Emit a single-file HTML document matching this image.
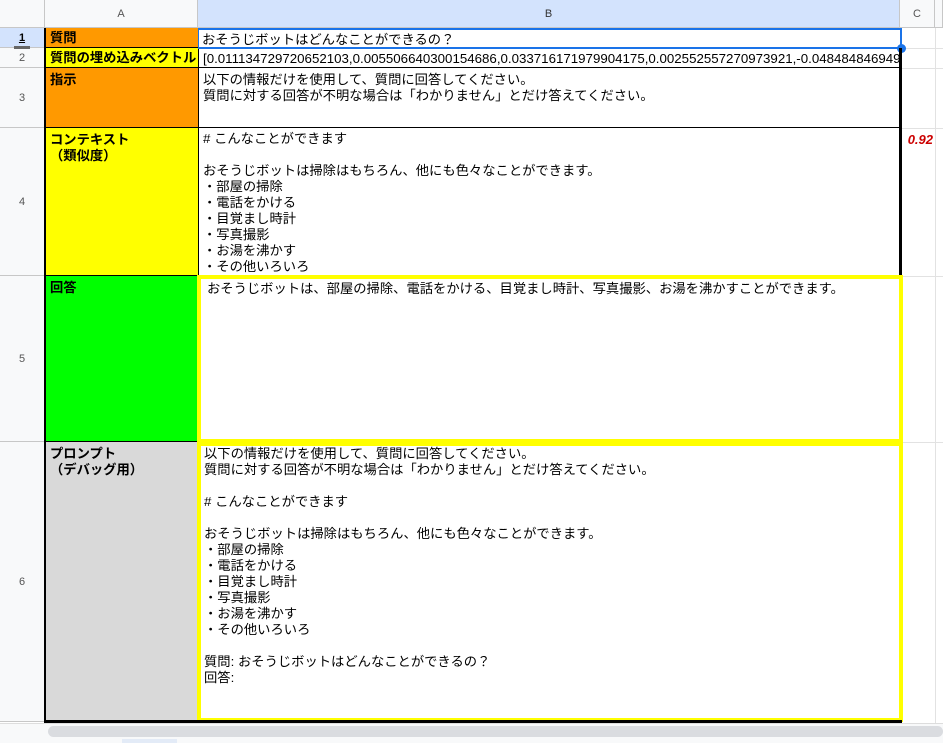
<!DOCTYPE html>
<html><head><meta charset="utf-8"><style>
body{margin:0;width:943px;height:743px;overflow:hidden;background:#fff;font-family:"Liberation Sans","Noto Sans CJK JP",sans-serif;font-size:13.3px;color:#000;position:relative}
div{position:absolute;box-sizing:border-box}
.h{background:#f8f9fa;color:#555;font-size:11px;text-align:center;border-right:1px solid #c7c7c7;border-bottom:1px solid #c7c7c7}
.c{line-height:16px;white-space:pre;overflow:hidden;padding-left:4px}
.a{font-weight:bold;padding-left:5px;line-height:16px;white-space:pre}
.gl{background:#e2e2e2}
</style></head><body>
<div class="h" style="left:0;top:0;width:45px;height:28px;background:#f8f9fa"></div>
<div class="h" style="left:45px;top:0;width:153px;height:28px;line-height:28px">A</div>
<div class="h" style="left:198px;top:0;width:702px;height:28px;line-height:28px;background:#d3e3fd;color:#333">B</div>
<div class="h" style="left:900px;top:0;width:35px;height:28px;line-height:28px">C</div>
<div class="h" style="left:935px;top:0;width:8px;height:28px"></div>
<div class="h" style="left:0;top:28px;width:45px;height:20px;line-height:20px;background:#d3e3fd;color:#000;font-weight:bold;text-decoration:underline">1</div>
<div class="h" style="left:0;top:48px;width:45px;height:20px;line-height:20px">2</div>
<div style="left:14px;top:46px;width:16px;height:3px;background:#666"></div>
<div class="h" style="left:0;top:68px;width:45px;height:60px;line-height:60px">3</div>
<div class="h" style="left:0;top:128px;width:45px;height:148px;line-height:148px">4</div>
<div class="h" style="left:0;top:276px;width:45px;height:166px;line-height:166px">5</div>
<div class="h" style="left:0;top:442px;width:45px;height:280px;line-height:280px">6</div>
<div class="gl" style="left:935px;top:28px;width:1px;height:695px"></div>
<div class="gl" style="left:900px;top:68px;width:43px;height:1px"></div>
<div class="gl" style="left:900px;top:48px;width:43px;height:1px"></div>
<div class="gl" style="left:900px;top:128px;width:43px;height:1px"></div>
<div class="gl" style="left:900px;top:276px;width:43px;height:1px"></div>
<div class="gl" style="left:900px;top:442px;width:43px;height:1px"></div>
<div class="a" style="left:45px;top:28px;width:153px;height:20px;background:#ff9900;line-height:20px;border-bottom:1px solid #000">質問</div>
<div class="a" style="left:45px;top:48px;width:153px;height:20px;background:#ffff00;line-height:20px;border-bottom:1px solid #000">質問の埋め込みベクトル</div>
<div class="a" style="left:45px;top:68px;width:153px;height:60px;background:#ff9900;padding-top:4px;border-bottom:1px solid #000">指示</div>
<div class="a" style="left:45px;top:128px;width:153px;height:148px;background:#ffff00;padding-top:4px;border-bottom:1px solid #000">コンテキスト
（類似度）</div>
<div class="a" style="left:45px;top:276px;width:153px;height:166px;background:#00ff00;padding-top:4px;border-bottom:1px solid #000">回答</div>
<div class="a" style="left:45px;top:442px;width:153px;height:280px;background:#d9d9d9;padding-top:4px">プロンプト
（デバッグ用）</div>
<div class="c" style="left:198px;top:28px;width:704px;height:21px;line-height:20px;border:2px solid #1a73e8;border-left:1px solid #1a73e8;padding-left:3px">おそうじボットはどんなことができるの？</div>
<div style="left:897px;top:44px;width:9px;height:9px;border-radius:50%;background:#1a73e8"></div>
<div class="c" style="left:198px;top:49px;width:702px;height:19px;line-height:19px;border-left:1px solid #000;border-bottom:1px solid #000">[0.011134729720652103,0.005506640300154686,0.033716171979904175,0.002552557270973921,-0.048484846949</div>
<div class="c" style="left:198px;top:68px;width:702px;height:60px;padding-top:4px;border-left:1px solid #000;border-bottom:1px solid #000">以下の情報だけを使用して、質問に回答してください。
質問に対する回答が不明な場合は「わかりません」とだけ答えてください。</div>
<div class="c" style="left:198px;top:128px;width:702px;height:148px;padding-top:3px;border-left:1px solid #000"># こんなことができます

おそうじボットは掃除はもちろん、他にも色々なことができます。
・部屋の掃除
・電話をかける
・目覚まし時計
・写真撮影
・お湯を沸かす
・その他いろいろ</div>
<div style="left:899px;top:48px;width:3px;height:228px;background:#000"></div>
<div style="left:903px;top:132px;width:30px;color:#cc0000;font-weight:bold;font-style:italic;font-size:13px;text-align:right;line-height:16px">0.92</div>
<div class="c" style="left:197px;top:275px;width:706px;height:168px;border:4px solid #ffff00;padding-left:6px;padding-top:2px">おそうじボットは、部屋の掃除、電話をかける、目覚まし時計、写真撮影、お湯を沸かすことができます。</div>
<div class="c" style="left:197px;top:443px;width:706px;height:279px;border:4px solid #ffff00;border-top-width:3px;padding-left:3px;line-height:16px;padding-top:0">以下の情報だけを使用して、質問に回答してください。
質問に対する回答が不明な場合は「わかりません」とだけ答えてください。

# こんなことができます

おそうじボットは掃除はもちろん、他にも色々なことができます。
・部屋の掃除
・電話をかける
・目覚まし時計
・写真撮影
・お湯を沸かす
・その他いろいろ

質問: おそうじボットはどんなことができるの？
回答:</div>
<div style="left:44px;top:28px;width:2px;height:695px;background:#000"></div>
<div style="left:44px;top:720px;width:858px;height:3px;background:#000"></div>
<div style="left:0;top:723px;width:943px;height:20px;background:#f8f9fa;border-top:1px solid #ddd"></div>
<div style="left:48px;top:726px;width:895px;height:11px;background:#dadce0;border-radius:6px"></div>
<div style="left:122px;top:739px;width:55px;height:4px;background:#e3ebf7"></div>
</body></html>
